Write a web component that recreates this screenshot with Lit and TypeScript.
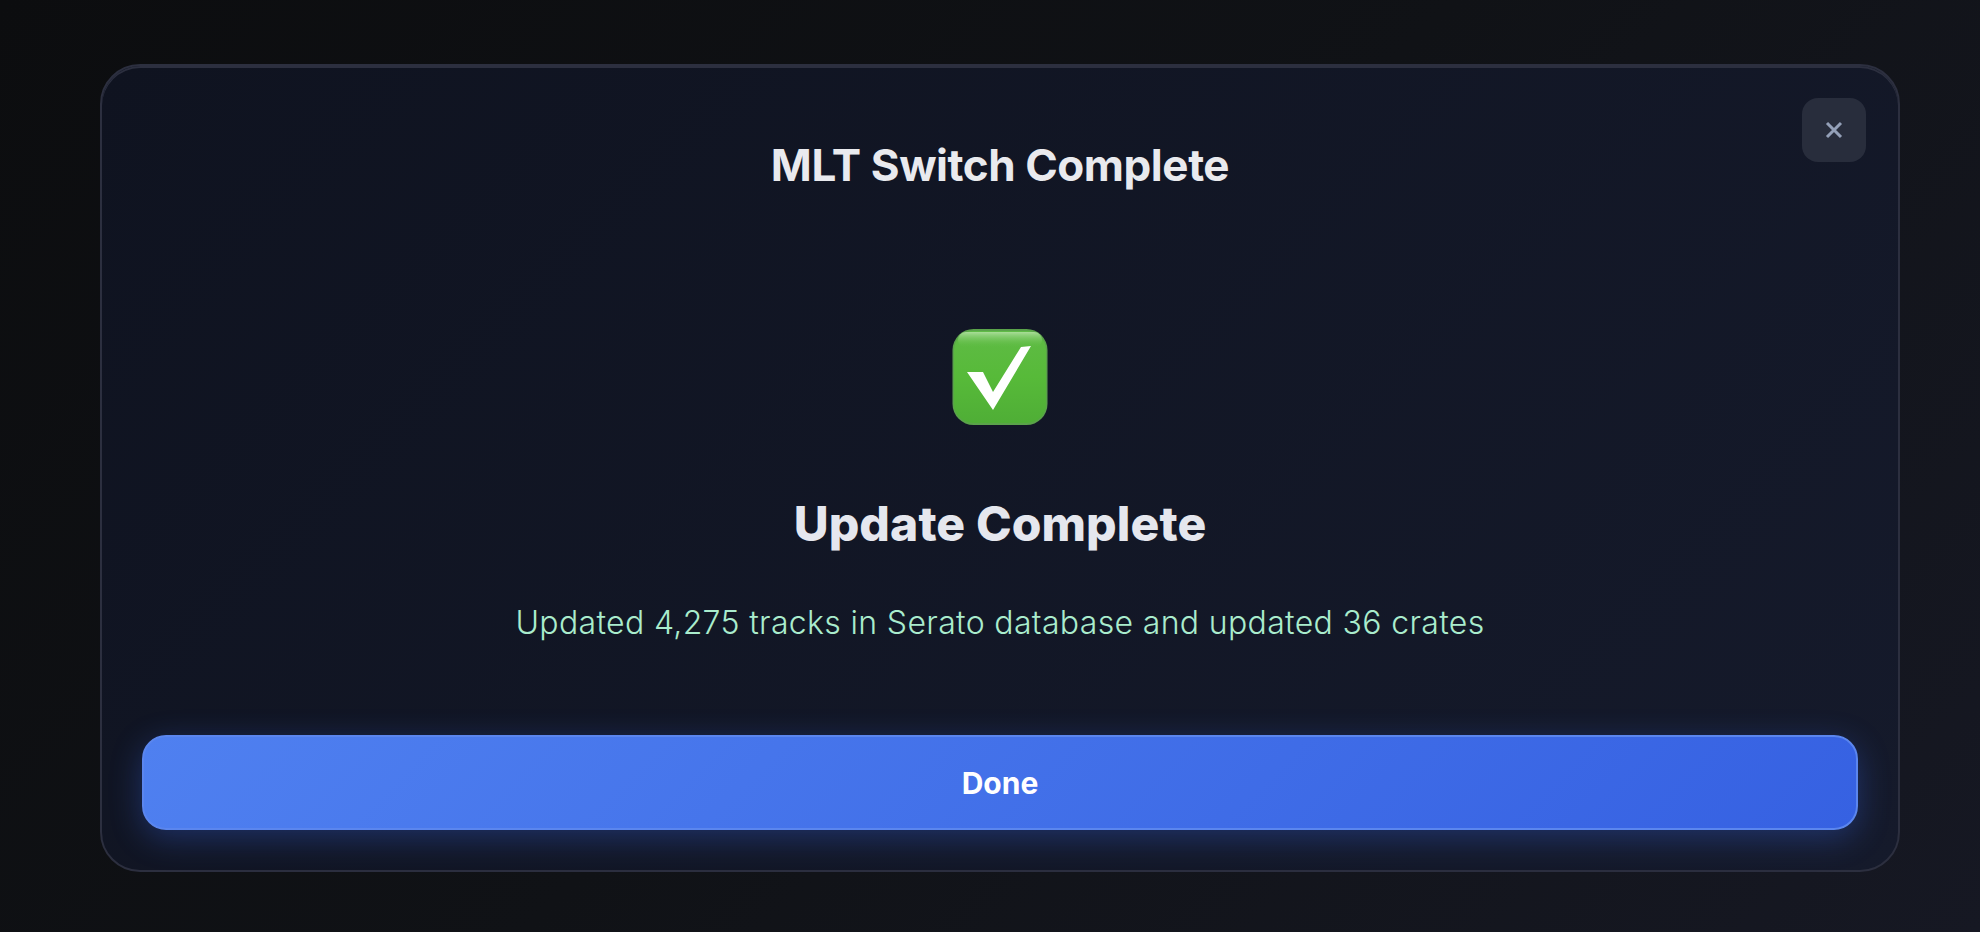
import { LitElement, html, css } from "lit";
import { customElement } from "lit/decorators.js";

@customElement("app-root")
export class AppRoot extends LitElement {
  static styles = css`
    :host {
      display: block;
      width: 1980px;
      height: 932px;
      font-family: Inter, "Noto Sans", sans-serif;
    }
    .page {
      box-sizing: border-box;
      width: 100%;
      height: 100%;
      padding: 64px 80px 60px 100px;
      background: linear-gradient(135deg, #0c0d0f 0%, #101216 50%, #161823 100%);
    }
    .card {
      position: relative;
      box-sizing: border-box;
      height: 100%;
      display: flex;
      flex-direction: column;
      align-items: center;
      padding: 0 40px 40px;
      border: 2px solid #2c2f3f;
      border-radius: 40px;
      background: linear-gradient(135deg, #0f1320 0%, #151a2b 100%);
      box-shadow: inset 0 2px 0 #2c2f3f;
    }
    .close {
      position: absolute;
      top: 32px;
      right: 32px;
      width: 64px;
      height: 64px;
      border: 0;
      padding: 0;
      border-radius: 16px;
      background: #282d3c;
      display: flex;
      align-items: center;
      justify-content: center;
    }
    .close svg { display: block; }
    h2 {
      margin: 71px 0 0;
      font-size: 44px;
      line-height: 56px;
      font-weight: 700;
      letter-spacing: -0.44px;
      color: #e9eaee;
    }
    .body {
      flex: 1;
      display: flex;
      flex-direction: column;
      align-items: center;
    }
    .emoji { display: block; margin-top: 136px; }
    h3 {
      margin: 67px 0 0;
      font-size: 48px;
      line-height: 64px;
      font-weight: 850;
      letter-spacing: 0.1px;
      color: #e5e7ee;
    }
    p {
      margin: 43px 0 0;
      font-size: 32px;
      line-height: 48px;
      font-weight: 350;
      letter-spacing: 0.34px;
      color: #aaeccd;
    }
    .done {
      box-sizing: border-box;
      width: 100%;
      height: 95px;
      border: 2px solid #5b86ee;
      border-radius: 24px;
      background: linear-gradient(135deg, #4f80f0 0%, #3661e2 100%);
      box-shadow: 0 8px 32px rgba(59, 110, 246, 0.32);
      color: #fff;
      font-family: inherit;
      font-size: 30px;
      font-weight: 700;
    }
  `;

  render() {
    return html`
      <div class="page">
        <section class="card">
          <button class="close" aria-label="Close">
            <svg width="18" height="18" viewBox="0 0 18 18" fill="none" stroke="#94a0b8" stroke-width="3">
              <path d="M2 2 L16 16 M16 2 L2 16" />
            </svg>
          </button>
          <h2>MLT Switch Complete</h2>
          <div class="body">
            <svg class="emoji" width="96" height="96" viewBox="0 0 96 96">
              <defs>
                <linearGradient id="g" x1="0" y1="0" x2="0" y2="1">
                  <stop offset="0" stop-color="#5fbb45" />
                  <stop offset="0.5" stop-color="#57ba39" />
                  <stop offset="1" stop-color="#4fae36" />
                </linearGradient>
                <linearGradient id="h" x1="0" y1="0" x2="0" y2="1">
                  <stop offset="0" stop-color="#a9dd98" />
                  <stop offset="1" stop-color="#5abb3e" stop-opacity="0" />
                </linearGradient>
              </defs>
              <rect x="0.5" y="0" width="95" height="96" rx="21" fill="#5aa34a" />
              <rect x="2" y="2" width="92" height="92" rx="19" fill="url(#g)" />
              <rect x="6" y="3" width="84" height="16" rx="8" fill="url(#h)" />
              <polygon points="15,43 31,43 41,63 69,18 79,17 41,81" fill="#fff" />
            </svg>
            <h3>Update Complete</h3>
            <p>Updated 4,275 tracks in Serato database and updated 36 crates</p>
          </div>
          <button class="done">Done</button>
        </section>
      </div>
    `;
  }
}
